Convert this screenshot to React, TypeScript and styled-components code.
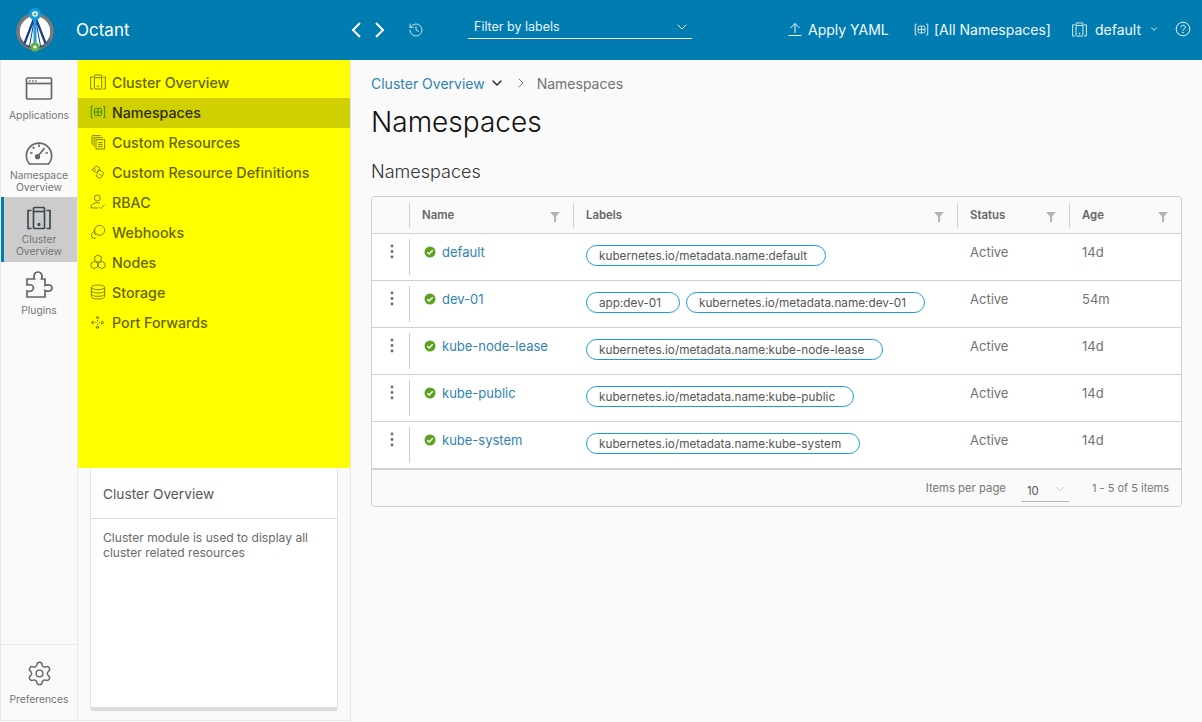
import React from "react";
import styled, { createGlobalStyle } from "styled-components";
import { ChevronDown, ChevronRight, History, Settings } from "lucide-react";

const GlobalStyle = createGlobalStyle`
  html, body { margin: 0; padding: 0; height: 100%; background: #fafafa; }
  body { font-family: Inter, "Liberation Sans", sans-serif; overflow: hidden; }
  #root { height: 721px; }
  * { box-sizing: border-box; }
`;

const Page = styled.div`
  display: flex;
  flex-direction: column;
  width: 1202px;
  height: 721px;
`;

const TopBar = styled.header`
  display: flex;
  align-items: center;
  flex: 0 0 60px;
  background: #007cb0;
  color: #fff;
`;

const LogoSlot = styled.div`
  display: flex;
  justify-content: center;
  width: 70px;
  margin-right: 6px;
`;

const Brand = styled.div`
  width: 270px;
  font-size: 17px;
  font-weight: 400;
`;

const NavArrows = styled.div`
  display: flex;
  align-items: center;
  flex: 0 0 74px;
  gap: 12px;
  margin-left: 4px;
  svg { display: block; flex: none; }
`;

const FilterBox = styled.div`
  display: flex;
  align-items: center;
  justify-content: space-between;
  width: 224px;
  height: 23px;
  margin-left: 44px;
  margin-top: -5px;
  padding: 0 2px 1px 6px;
  border-bottom: 1px solid #fff;
  font-size: 12.5px;
  color: #e8f4f9;
`;

const TopActions = styled.div`
  display: flex;
  align-items: center;
  margin-left: 95px;
  padding-bottom: 2px;
  font-size: 14px;
  color: #f2fafd;
`;

const TopAction = styled.div<{ $gap: number; $width: number }>`
  display: flex;
  align-items: center;
  gap: ${(p) => p.$gap}px;
  width: ${(p) => p.$width}px;
  white-space: nowrap;
`;

const Body = styled.div`
  display: flex;
  flex: 1;
  min-height: 0;
`;

const Rail = styled.nav`
  display: flex;
  flex-direction: column;
  flex: 0 0 78px;
  border-left: 1px solid #e8e8e8;
  border-right: 1px solid #e8e8e8;
  border-bottom: 1px solid #e8e8e8;
  background: #fafafa;
`;

const RailItem = styled.div<{ $active?: boolean; $height: number; $gap: number }>`
  display: flex;
  flex-direction: column;
  align-items: center;
  justify-content: center;
  height: ${(p) => p.$height}px;
  gap: ${(p) => p.$gap}px;
  background: ${(p) => (p.$active ? "#cccccc" : "transparent")};
  border-left: 3px solid ${(p) => (p.$active ? "#007cb0" : "transparent")};
  padding-right: 3px;
  color: #666;
  svg { display: block; }
`;

const RailIconSlot = styled.div<{ $dark?: boolean }>`
  display: flex;
  align-items: center;
  justify-content: center;
  width: 30px;
  height: 30px;
  color: ${(p) => (p.$dark ? "#3a4a55" : "inherit")};
`;

const RailLabel = styled.div`
  font-size: 10.3px;
  line-height: 12px;
  text-align: center;
  color: #757575;
`;

const RailFoot = styled.div`
  margin-top: auto;
  border-top: 1px solid #e8e8e8;
`;

const Side = styled.aside`
  display: flex;
  flex-direction: column;
  flex: 0 0 273px;
  border-right: 1px solid #e8e8e8;
  border-bottom: 1px solid #e8e8e8;
`;

const SideNav = styled.div`
  flex: 0 0 408px;
  padding-top: 8px;
  background: #ffff00;
`;

const SideRow = styled.div<{ $active?: boolean }>`
  display: flex;
  align-items: center;
  gap: 6px;
  height: 30px;
  padding: 0 0 2px 12px;
  font-size: 14.25px;
  font-weight: 500;
  background: ${(p) => (p.$active ? "#d0d000" : "transparent")};
  color: ${(p) => (p.$active ? "#2e2e00" : "#666600")};
  svg { display: block; color: ${(p) => (p.$active ? "#2f8a00" : "#777700")}; }
`;

const InfoCard = styled.section`
  flex: 0 0 243px;
  margin: 0 12px;
  background: #fff;
  border: 1px solid #e4e4e4;
  border-top: none;
  border-bottom: 4px solid #dcdcdc;
  border-radius: 0 0 3px 3px;
`;

const InfoTitle = styled.div`
  height: 51px;
  padding: 18px 12px 0;
  border-bottom: 1px solid #dcdcdc;
  font-size: 13.7px;
  color: #565656;
`;

const InfoText = styled.p`
  margin: 0;
  padding: 11px 12px 0;
  font-size: 12.1px;
  line-height: 15px;
  color: #6a6a6a;
`;

const Main = styled.main`
  flex: 1;
  padding: 14px 20px 0;
  min-width: 0;
`;

const Crumbs = styled.div`
  display: flex;
  align-items: center;
  height: 18px;
  font-size: 14px;
  color: #727272;
  svg { display: block; }
`;

const CrumbLink = styled.span`
  color: #2f84b2;
`;

const PageTitle = styled.h1`
  margin: 13px 0 0;
  font-size: 28px;
  line-height: 34px;
  font-weight: 300;
  color: #111;
`;

const SubTitle = styled.h2`
  margin: 22px 0 0;
  font-size: 18px;
  line-height: 22px;
  font-weight: 300;
  color: #333;
`;

const Table = styled.div`
  margin-top: 13px;
  width: 811px;
  border: 1px solid #cfcfcf;
  border-radius: 3px;
  background: #fff;
  overflow: hidden;
`;

const cols = "37px 164px 384px 112px 1fr";

const HeadRow = styled.div`
  display: grid;
  grid-template-columns: ${cols};
  height: 37px;
  background: #fafafa;
  border-bottom: 1px solid #cfcfcf;
`;

const HeadCell = styled.div<{ $line?: boolean }>`
  display: flex;
  align-items: center;
  justify-content: space-between;
  margin: 6px 0 5px;
  padding: 0 13px 2px 12px;
  border-left: ${(p) => (p.$line ? "1px solid #cfcfcf" : "none")};
  font-size: 11.4px;
  font-weight: 600;
  color: #666;
  svg { display: block; margin-top: 4px; }
`;

const Row = styled.div`
  display: grid;
  grid-template-columns: ${cols};
  height: 47px;
  border-bottom: 1px solid #cfcfcf;
`;

const MenuCell = styled.div`
  display: flex;
  justify-content: center;
  padding: 10px 0 0 2px;
  color: #6a6a6a;
`;

const NameCell = styled.div`
  display: flex;
  align-items: flex-start;
  gap: 6px;
  margin: 5px 0 5px;
  padding: 5px 0 0 14px;
  border-left: 1px solid #cfcfcf;
  font-size: 13px;
  line-height: 16px;
  color: #2f84b2;
  svg { display: block; margin-top: 2px; }
`;

const ChipCell = styled.div`
  display: flex;
  align-items: flex-start;
  gap: 6px;
  padding: 11px 0 0 13px;
`;

const Chip = styled.span`
  display: inline-flex;
  align-items: center;
  height: 21px;
  padding: 0 18px 0 12px;
  border: 1px solid #1b9cd8;
  border-radius: 11px;
  font-size: 11.75px;
  color: #565656;
  white-space: nowrap;
`;

const TextCell = styled.div`
  padding: 10px 0 0 13px;
  font-size: 13px;
  line-height: 16px;
  color: #727272;
`;

const Footer = styled.div`
  display: flex;
  align-items: center;
  justify-content: flex-end;
  height: 37px;
  padding: 0 12px 0 0;
  border-top: 1px solid #cfcfcf;
  background: #fafafa;
  font-size: 11.3px;
  color: #777;
`;

const PageRange = styled.span`
  font-size: 11px;
`;

const PageSize = styled.div`
  display: flex;
  align-items: center;
  justify-content: space-between;
  width: 48px;
  height: 24px;
  margin: 4px 23px 0 15px;
  padding: 2px 2px 0 6px;
  border-bottom: 1px solid #b5b5b5;
  color: #565656;
  svg { display: block; margin-top: -4px; color: #b0b0b0; }
`;

const Glyph = styled.svg`
  display: block;
  flex: none;
  fill: none;
  stroke: currentColor;
  stroke-width: 1.4;
  overflow: visible;
`;

type IconProps = { size?: number; w?: number };

const WindowIcon = ({ size = 30 }: IconProps) => (
  <Glyph width={size} height={size} viewBox="0 0 30 30" style={{ strokeWidth: 1.7 }}>
    <rect x="2.500" y="4" width="25" height="21" rx="1.200" />
    <path d="M2.500 9.500h25" />
    <path d="M5 7h1.500M8 7h1.500M11 7h1.500" />
  </Glyph>
);

const GaugeIcon = ({ size = 30 }: IconProps) => (
  <Glyph width={size} height={size} viewBox="0 0 30 30" style={{ strokeWidth: 1.7 }}>
    <path d="M5.500 25a12.600 12.600 0 1 1 19 0H5.500Z" />
    <path d="M15 5.500v2.500M6 14h2.500M21.500 14H24M8.700 8l1.700 1.700" />
    <path d="M13.500 17.700 20.500 9" />
    <circle cx="13.500" cy="17.700" r="1.800" fill="currentColor" />
  </Glyph>
);

const ClusterIcon = ({ size = 16, w = 1.4 }: IconProps) => (
  <Glyph width={size} height={size} viewBox="0 0 24 24" style={{ strokeWidth: w }}>
    <rect x="6.500" y="1.500" width="11" height="21" rx="1" />
    <path d="M6.500 5.500h11" />
    <path d="M4.500 4.500H1v18h3.500M19.500 4.500H23v18h-3.500" />
    <circle cx="12" cy="18.500" r="0.800" fill="currentColor" />
  </Glyph>
);

const PluginIcon = ({ size = 30 }: IconProps) => (
  <Glyph width={size} height={size} viewBox="0 0 30 30" style={{ strokeWidth: 1.7 }}>
    <path
      d="M2 10H9.500C8 7 9.500 3 13 3s5 4 3.500 7H20v6.500C23 15 27 16 27 19s-4 4-7 2.500V28H2v-6c3 1 6.500 0 6.500-3S5 15 2 16Z"
      transform="translate(1 -3)"
    />
  </Glyph>
);

const NamespaceIcon = ({ size = 16 }: IconProps) => (
  <Glyph width={size} height={size} viewBox="0 0 24 24">
    <path d="M4.500 3.500H2v17h2.500M19.500 3.500H22v17h-2.500" />
    <rect x="6.500" y="6.500" width="11" height="11" rx="2.500" />
    <path d="M12 6.500v11M6.500 12h11" />
  </Glyph>
);

const ResourcesIcon = ({ size = 16 }: IconProps) => (
  <Glyph width={size} height={size} viewBox="0 0 24 24">
    <path d="M3 16V2.500h13" />
    <path d="M6 19V5.500h13" />
    <rect x="9" y="8.500" width="13" height="14" />
    <path d="M12 13h7M12 16h7M12 19h7" />
  </Glyph>
);

const DefinitionsIcon = ({ size = 16 }: IconProps) => (
  <Glyph width={size} height={size} viewBox="0 0 24 24">
    <path d="M3 9 9 2.500l6 4-5 6.500Z" />
    <path d="M10 13l5-4 6 5-6 8-6-4 3-4" />
    <path d="M6 7l3 2M14 15l3 2" />
  </Glyph>
);

const RbacIcon = ({ size = 16 }: IconProps) => (
  <Glyph width={size} height={size} viewBox="0 0 24 24">
    <circle cx="11" cy="6" r="4.500" />
    <path d="M2 21v-4c2-3 6-4 9-4 2 0 3 .3 4 .8" />
    <path d="M2 21h10" />
    <path d="M13 19l3 3 6-6" />
  </Glyph>
);

const WebhookIcon = ({ size = 16 }: IconProps) => (
  <Glyph width={size} height={size} viewBox="0 0 24 24">
    <circle cx="14.500" cy="9.500" r="7.500" />
    <path d="M7.200 7.500a5.500 5.500 0 0 0 2 8.800" />
    <path d="M4 12.500c-2 2-2.500 5.500-.5 7.500s3.800 2 6 .5" />
    <path d="M2 22l2-2" />
  </Glyph>
);

const NodesIcon = ({ size = 16 }: IconProps) => (
  <Glyph width={size} height={size} viewBox="0 0 24 24">
    <path d="M12 1.500l5 2.800v5.500l-5 2.800-5-2.800V4.300Z" />
    <path d="M6.500 11l5 2.800v5.500l-5 2.800-5-2.800v-5.500Z" />
    <path d="M17.500 11l5 2.800v5.500l-5 2.800-5-2.800v-5.500Z" />
  </Glyph>
);

const StorageIcon = ({ size = 16 }: IconProps) => (
  <Glyph width={size} height={size} viewBox="0 0 24 24">
    <ellipse cx="12" cy="5" rx="10" ry="3.500" />
    <path d="M2 5v14c0 2 4.500 3.500 10 3.500s10-1.500 10-3.500V5" />
    <path d="M2 10c0 2 4.500 3.500 10 3.500S22 12 22 10M2 15c0 2 4.500 3.500 10 3.500S22 17 22 15" />
  </Glyph>
);

const PortIcon = ({ size = 15 }: IconProps) => (
  <Glyph width={size} height={size} viewBox="0 0 24 24" style={{ strokeWidth: 1.6, marginRight: 1 }}>
    <path d="M12 2 9.500 5h5ZM12 22l-2.500-3h5ZM2 12l3-2.500v5ZM22 12l-3-2.500v5Z" />
    <path d="M12 8v2M12 14v2M8 12h2M14 12h2" />
  </Glyph>
);

const UploadIcon = ({ size = 16 }: IconProps) => (
  <Glyph width={size} height={size} viewBox="0 0 16 16" style={{ strokeWidth: 1 }}>
    <path d="M8 12V2.500M3.500 7 8 2.500 12.500 7M1.500 14.500h13" />
  </Glyph>
);

const HelpIcon = ({ size = 16 }: IconProps) => (
  <Glyph width={size} height={size} viewBox="0 0 16 16" style={{ strokeWidth: 1 }}>
    <circle cx="8" cy="8" r="6.800" />
    <path d="M5.800 6.300C6 4.900 7 4.300 8 4.300c1.300 0 2.300.8 2.300 2 0 1.700-2.300 1.700-2.300 3.500" />
    <circle cx="8" cy="11.500" r="0.400" />
  </Glyph>
);

const BackArrow = () => (
  <svg width="12" height="16" viewBox="0 0 12 16">
    <path d="M10 1 3 8l7 7" fill="none" stroke="#fff" strokeWidth="2" />
  </svg>
);

const ForwardArrow = () => (
  <svg width="12" height="16" viewBox="0 0 12 16">
    <path d="M2 1l7 7-7 7" fill="none" stroke="#fff" strokeWidth="2" />
  </svg>
);

const FunnelIcon = () => (
  <svg width="10" height="10" viewBox="0 0 10 10">
    <path d="M0 0h10L6 4.500V10H4V4.500Z" fill="#b3b3b3" />
  </svg>
);

const DotsIcon = () => (
  <svg width="4" height="15" viewBox="0 0 4 15">
    <circle cx="2" cy="2" r="1.400" fill="#6a6a6a" />
    <circle cx="2" cy="7.500" r="1.400" fill="#6a6a6a" />
    <circle cx="2" cy="13" r="1.400" fill="#6a6a6a" />
  </svg>
);

const OkIcon = () => (
  <svg width="12" height="12" viewBox="0 0 12 12">
    <circle cx="6" cy="6" r="5.500" fill="#5aa220" />
    <path d="M3.300 6.200 5.200 8l3.500-3.700" fill="none" stroke="#fff" strokeWidth="1.500" />
  </svg>
);

const OctantLogo = () => (
  <svg width="40" height="46" viewBox="0 0 40 46">
    <circle cx="20" cy="24.500" r="17" fill="#fff" stroke="#77787b" strokeWidth="3.600" />
    <path d="M4.500 32 C8 38 13 41.500 20 41.500 C27 41.500 32 38 35.500 32 L30 38 L20 41 L10 38Z" fill="#1a4a8c" />
    <path d="M20 9 9.500 36.500M20 9 30.500 36.500" stroke="#123f87" strokeWidth="2.200" fill="none" />
    <path d="M20 9 14.500 39M20 9 25.500 39" stroke="#123f87" strokeWidth="1" fill="none" />
    <path d="M20 9v31" stroke="#1f9fe0" strokeWidth="3" />
    <circle cx="20" cy="7" r="6" fill="#149ddd" />
    <circle cx="20" cy="7" r="2.800" fill="#fff" />
    <circle cx="20" cy="7" r="1.500" fill="#62b346" />
    <circle cx="20" cy="40" r="4.600" fill="#62b346" />
    <circle cx="20" cy="40" r="1.600" fill="#fff" />
  </svg>
);

const railItems = [
  { label: ["Applications"], icon: <WindowIcon />, height: 74, gap: 5 },
  { label: ["Namespace", "Overview"], icon: <GaugeIcon />, height: 63, gap: -1 },
  { label: ["Cluster", "Overview"], icon: <ClusterIcon size={24} w={1.7} />, height: 65, gap: 0, active: true },
  { label: ["Plugins"], icon: <PluginIcon />, height: 64, gap: 2 },
];

const sideItems = [
  { label: "Cluster Overview", icon: <ClusterIcon /> },
  { label: "Namespaces", icon: <NamespaceIcon />, active: true },
  { label: "Custom Resources", icon: <ResourcesIcon /> },
  { label: "Custom Resource Definitions", icon: <DefinitionsIcon /> },
  { label: "RBAC", icon: <RbacIcon /> },
  { label: "Webhooks", icon: <WebhookIcon /> },
  { label: "Nodes", icon: <NodesIcon /> },
  { label: "Storage", icon: <StorageIcon /> },
  { label: "Port Forwards", icon: <PortIcon /> },
];

const rows = [
  { name: "default", labels: ["kubernetes.io/metadata.name:default"], age: "14d" },
  { name: "dev-01", labels: ["app:dev-01", "kubernetes.io/metadata.name:dev-01"], age: "54m" },
  { name: "kube-node-lease", labels: ["kubernetes.io/metadata.name:kube-node-lease"], age: "14d" },
  { name: "kube-public", labels: ["kubernetes.io/metadata.name:kube-public"], age: "14d" },
  { name: "kube-system", labels: ["kubernetes.io/metadata.name:kube-system"], age: "14d" },
];

export default function App() {
  return (
    <Page>
      <GlobalStyle />
      <TopBar>
        <LogoSlot>
          <OctantLogo />
        </LogoSlot>
        <Brand>Octant</Brand>
        <NavArrows>
          <BackArrow />
          <ForwardArrow />
          <History size={16} strokeWidth={1.3} color="#dff0f7" style={{ marginLeft: 10 }} />
        </NavArrows>
        <FilterBox>
          Filter by labels
          <ChevronDown size={16} strokeWidth={1.5} />
        </FilterBox>
        <TopActions>
          <TopAction $gap={5} $width={127}>
            <UploadIcon />
            Apply YAML
          </TopAction>
          <TopAction $gap={5} $width={158}>
            <NamespaceIcon size={15} />
            [All Namespaces]
          </TopAction>
          <TopAction $gap={8} $width={103}>
            <ClusterIcon size={15} />
            default
            <ChevronDown size={10} strokeWidth={2} />
          </TopAction>
          <HelpIcon />
        </TopActions>
      </TopBar>
      <Body>
        <Rail>
          {railItems.map((item) => (
            <RailItem key={item.label[0]} $active={item.active} $height={item.height} $gap={item.gap}>
              <RailIconSlot $dark={item.active}>{item.icon}</RailIconSlot>
              <RailLabel>
                {item.label.map((line) => (
                  <div key={line}>{line}</div>
                ))}
              </RailLabel>
            </RailItem>
          ))}
          <RailFoot>
            <RailItem $height={75} $gap={6}>
              <Settings size={27} strokeWidth={1.25} />
              <RailLabel>Preferences</RailLabel>
            </RailItem>
          </RailFoot>
        </Rail>
        <Side>
          <SideNav>
            {sideItems.map((item) => (
              <SideRow key={item.label} $active={item.active}>
                {item.icon}
                {item.label}
              </SideRow>
            ))}
          </SideNav>
          <InfoCard>
            <InfoTitle>Cluster Overview</InfoTitle>
            <InfoText>
              Cluster module is used to display all
              <br />
              cluster related resources
            </InfoText>
          </InfoCard>
        </Side>
        <Main>
          <Crumbs>
            <CrumbLink>Cluster Overview</CrumbLink>
            <ChevronDown size={16} strokeWidth={2} color="#222" style={{ marginLeft: 4 }} />
            <ChevronRight size={16} strokeWidth={1.5} color="#777" style={{ marginLeft: 8, marginRight: 8 }} />
            Namespaces
          </Crumbs>
          <PageTitle>Namespaces</PageTitle>
          <SubTitle>Namespaces</SubTitle>
          <Table>
            <HeadRow>
              <div />
              {["Name", "Labels", "Status", "Age"].map((title) => (
                <HeadCell key={title} $line>
                  {title}
                  <FunnelIcon />
                </HeadCell>
              ))}
            </HeadRow>
            {rows.map((row) => (
              <Row key={row.name}>
                <MenuCell>
                  <DotsIcon />
                </MenuCell>
                <NameCell>
                  <OkIcon />
                  {row.name}
                </NameCell>
                <ChipCell>
                  {row.labels.map((label) => (
                    <Chip key={label}>{label}</Chip>
                  ))}
                </ChipCell>
                <TextCell>Active</TextCell>
                <TextCell>{row.age}</TextCell>
              </Row>
            ))}
            <Footer>
              Items per page
              <PageSize>
                10
                <ChevronDown size={14} strokeWidth={1} />
              </PageSize>
              <PageRange>1 - 5 of 5 items</PageRange>
            </Footer>
          </Table>
        </Main>
      </Body>
    </Page>
  );
}
